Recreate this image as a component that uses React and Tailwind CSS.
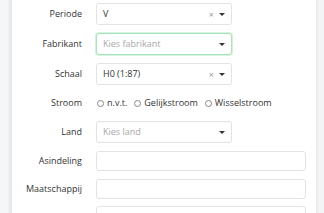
import React from "react";

const Caret = () => (
  <svg width="6" height="3" viewBox="0 0 6 3" className="shrink-0">
    <path d="M0 0h6L3 3z" fill="#333" />
  </svg>
);

const Select = ({ value, placeholder, clearable, focused }) => (
  <div
    className={`flex items-center h-[22px] w-[136px] rounded-[3px] border bg-white pl-[6px] pr-[6px] ${
      focused ? "border-[#a9e2bb] shadow-[0_0_0_1px_#d5f2de]" : "border-[#e3e3e3]"
    }`}
  >
    <span className={`flex-1 text-[9px] ${value ? "text-[#333]" : "text-[#a8a8a8]"}`}>
      {value || placeholder}
    </span>
    {clearable && <span className="text-[9px] text-[#999] mr-[5px] leading-none">×</span>}
    <Caret />
  </div>
);

const Row = ({ label, className = "", children }) => (
  <div className={`flex items-center ${className}`}>
    <div className="w-[70px] text-right text-[9px] text-[#333]">{label}</div>
    <div className="ml-[14px] flex items-center">{children}</div>
  </div>
);

const Radio = ({ label }) => (
  <label className="flex items-center gap-[3px] mr-[7px]">
    <span className="w-[7px] h-[7px] rounded-full border border-[#888] bg-white" />
    <span className="text-[9px] text-[#333]">{label}</span>
  </label>
);

const TextInput = () => (
  <div className="h-[20px] w-[210px] rounded-[3px] border border-[#e3e3e3] bg-white" />
);

export default function App() {
  return (
    <div
      className="flex w-[324px] h-[213px] overflow-hidden bg-white"
      style={{ fontFamily: '"Open Sans", "Noto Sans", sans-serif' }}
    >
      <div className="w-[12px] shrink-0 bg-gradient-to-r from-[#f5f6f8] from-60% to-[#e2e3e6]" />
      <div className="w-[304px] shrink-0 bg-white pt-[3px]">
        <Row label="Periode">
          <Select value="V" clearable />
        </Row>
        <Row label="Fabrikant" className="mt-[8px]">
          <Select placeholder="Kies fabrikant" focused />
        </Row>
        <Row label="Schaal" className="mt-[8px]">
          <Select value="H0 (1:87)" clearable />
        </Row>
        <Row label="Stroom" className="mt-[8px] h-[20px]">
          <div className="ml-[1px] flex items-center">
            <Radio label="n.v.t." />
            <Radio label="Gelijkstroom" />
            <Radio label="Wisselstroom" />
          </div>
        </Row>
        <Row label="Land" className="mt-[8px]">
          <Select placeholder="Kies land" />
        </Row>
        <Row label="Asindeling" className="mt-[8px]">
          <TextInput />
        </Row>
        <Row label="Maatschappij" className="mt-[8px]">
          <TextInput />
        </Row>
        <Row label="" className="mt-[7px]">
          <TextInput />
        </Row>
      </div>
      <div className="flex-1 bg-gradient-to-r from-[#e6e7ea] to-[#f3f4f6] to-30%" />
    </div>
  );
}
